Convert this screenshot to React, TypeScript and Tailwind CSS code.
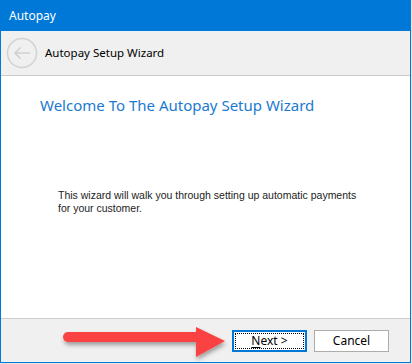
export default function App() {
  return (
    <div className="relative h-[364px] w-[412px] overflow-hidden bg-[#e6e6e6]">
      <div className="flex h-[363px] w-[411px] flex-col border-x border-b border-[#0078d7] bg-white">
        {/* title bar */}
        <div className="flex h-[31px] shrink-0 items-center bg-[#0078d7] pl-[8px] font-['Noto_Sans',sans-serif] text-[12px] text-white">
          Autopay
        </div>

        {/* header */}
        <div className="flex h-[45px] shrink-0 items-center gap-[7px] border-b border-[#cccccc] bg-[#f0f0f0] pl-[5px]">
          <svg width="32" height="32" viewBox="0 0 32 32" fill="none">
            <circle cx="16" cy="16" r="14.5" stroke="#d2d2d2" strokeWidth="1.5" />
            <path d="M9 16h15M14.5 10.5L9 16l5.5 5.5" stroke="#cfcfcf" strokeWidth="1.5" />
          </svg>
          <span className="font-['Noto_Sans',sans-serif] text-[11.5px] text-black">Autopay Setup Wizard</span>
        </div>

        {/* content */}
        <div className="h-[243px] shrink-0 border-b border-[#cccccc] bg-white pt-[18px]">
          <h1 className="pl-[39px] font-['Noto_Sans',sans-serif] text-[15px] leading-[22px] text-[#1a7ad0]">
            Welcome To The Autopay Setup Wizard
          </h1>
          <p className="mt-[73px] w-[364px] pl-[57px] font-['Liberation_Sans',sans-serif] text-[10.5px] leading-[13px] text-[#222]">
            This wizard will walk you through setting up automatic payments for your customer.
          </p>
        </div>

        {/* footer */}
        <div className="flex flex-1 items-start justify-end gap-[7px] bg-[#f0f0f0] pr-[21px] pt-[11px]">
          <button className="flex h-[22px] w-[75px] items-center justify-center border-2 border-[#0078d7] bg-white p-[1px]">
            <span className="flex h-full w-full items-center justify-center border border-dotted border-black font-['Noto_Sans',sans-serif] text-[12px] text-black">
              <span className="underline underline-offset-2">N</span>ext &gt;
            </span>
          </button>
          <button className="flex h-[22px] w-[75px] items-center justify-center border border-[#adadad] bg-white font-['Noto_Sans',sans-serif] text-[12px] text-black">
            Cancel
          </button>
        </div>
      </div>

      {/* annotation arrow */}
      <svg className="absolute left-[58px] top-[322px]" width="172" height="40" viewBox="0 0 172 40">
        <defs>
          <filter id="sh" x="-10%" y="-30%" width="120%" height="180%">
            <feDropShadow dx="1" dy="3" stdDeviation="2" floodColor="#000" floodOpacity="0.35" />
          </filter>
        </defs>
        <g filter="url(#sh)">
          <path d="M10 15h130" stroke="#fa4242" strokeWidth="10" strokeLinecap="round" />
          <path d="M138 5L167 19L138 35Z" fill="#fa4242" />
        </g>
      </svg>
    </div>
  );
}
